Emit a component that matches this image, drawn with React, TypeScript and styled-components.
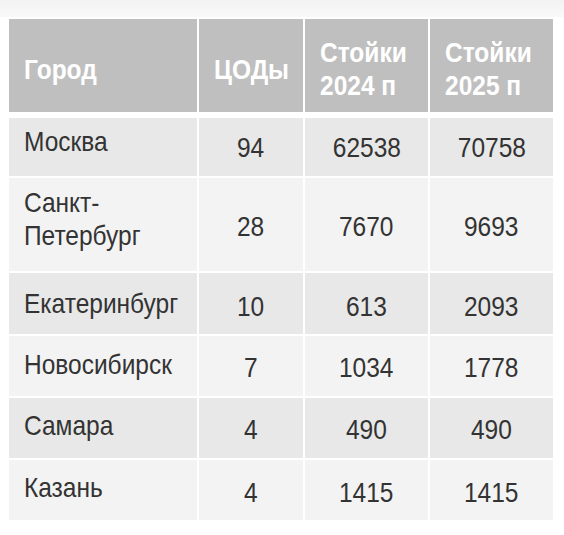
import React from "react";
import styled, { createGlobalStyle } from "styled-components";

const GlobalStyle = createGlobalStyle`
  html, body {
    margin: 0;
    padding: 0;
    background: #ffffff;
  }
  body {
    font-family: "Liberation Sans Narrow", "Arial Narrow", "Liberation Sans", Arial, sans-serif;
  }
`;

const Page = styled.div`
  width: 564px;
  height: 535px;
  background: #ffffff;
  display: flex;
  flex-direction: column;
`;

const TopStrip = styled.div`
  height: 17px;
  background: linear-gradient(#f3f3f3, #f9f9f9);
`;

const Table = styled.div`
  margin: 2px 0 0 9px;
  width: 544px;
  display: flex;
  flex-direction: column;
  gap: 2px;
`;

const cols = "188px 104px 123px 123px";

const HeadRow = styled.div`
  display: grid;
  grid-template-columns: ${cols};
  column-gap: 2px;
  height: 93px;
  margin-bottom: 4px;
`;

const HeadCell = styled.div`
  background: #bfbfbf;
  color: #ffffff;
  font-weight: 700;
  font-size: 28px;
  line-height: 33px;
  padding: 7px 0 0 15px;
  display: flex;
  align-items: center;
  overflow: hidden;
`;

/* Condensed rendering of the text (the reference uses a narrow face) */
const Narrow = styled.span<{ $origin: "left" | "center" }>`
  display: inline-block;
  white-space: nowrap;
  transform: scaleX(0.875);
  transform-origin: ${(p) => p.$origin} center;
`;

const Row = styled.div<{ $h: number }>`
  display: grid;
  grid-template-columns: ${cols};
  column-gap: 2px;
  height: ${(p) => p.$h}px;
`;

const Cell = styled.div<{ $odd: boolean }>`
  background: ${(p) => (p.$odd ? "#e8e8e8" : "#f3f3f3")};
  color: #333333;
  font-size: 28px;
  line-height: 33px;
  display: flex;
  align-items: center;
  overflow: hidden;
`;

const NameCell = styled(Cell)<{ $lift: number }>`
  padding: 0 0 ${(p) => p.$lift * 2}px 15px;
`;

const NumCell = styled(Cell)<{ $drop: number }>`
  justify-content: center;
  padding-top: ${(p) => p.$drop * 2}px;
`;

type RowData = {
  city: React.ReactNode;
  dc: number;
  r24: number;
  r25: number;
  h: number;
  lift: number;
  drop: number;
};

const rows: RowData[] = [
  { city: "Москва", dc: 94, r24: 62538, r25: 70758, h: 58, lift: 6, drop: 0 },
  { city: <>Санкт-<br />Петербург</>, dc: 28, r24: 7670, r25: 9693, h: 93, lift: 6, drop: 2 },
  { city: "Екатеринбург", dc: 10, r24: 613, r25: 2093, h: 61, lift: 0, drop: 2.5 },
  { city: "Новосибирск", dc: 7, r24: 1034, r25: 1778, h: 60, lift: 2, drop: 1 },
  { city: "Самара", dc: 4, r24: 490, r25: 490, h: 60, lift: 2.5, drop: 1.5 },
  { city: "Казань", dc: 4, r24: 1415, r25: 1415, h: 60, lift: 2.5, drop: 2 },
];

const headers: React.ReactNode[] = [
  "Город",
  "ЦОДы",
  <>Стойки<br />2024 п</>,
  <>Стойки<br />2025 п</>,
];

export default function App() {
  return (
    <>
      <GlobalStyle />
      <Page>
        <TopStrip />
        <Table>
          <HeadRow>
            {headers.map((h, i) => (
              <HeadCell key={i}>
                <Narrow $origin="left">{h}</Narrow>
              </HeadCell>
            ))}
          </HeadRow>
          {rows.map((r, i) => {
            const odd = i % 2 === 0;
            return (
              <Row key={i} $h={r.h}>
                <NameCell $odd={odd} $lift={r.lift}>
                  <Narrow $origin="left">{r.city}</Narrow>
                </NameCell>
                {[r.dc, r.r24, r.r25].map((v, j) => (
                  <NumCell key={j} $odd={odd} $drop={r.drop}>
                    <Narrow $origin="center">{v}</Narrow>
                  </NumCell>
                ))}
              </Row>
            );
          })}
        </Table>
      </Page>
    </>
  );
}
